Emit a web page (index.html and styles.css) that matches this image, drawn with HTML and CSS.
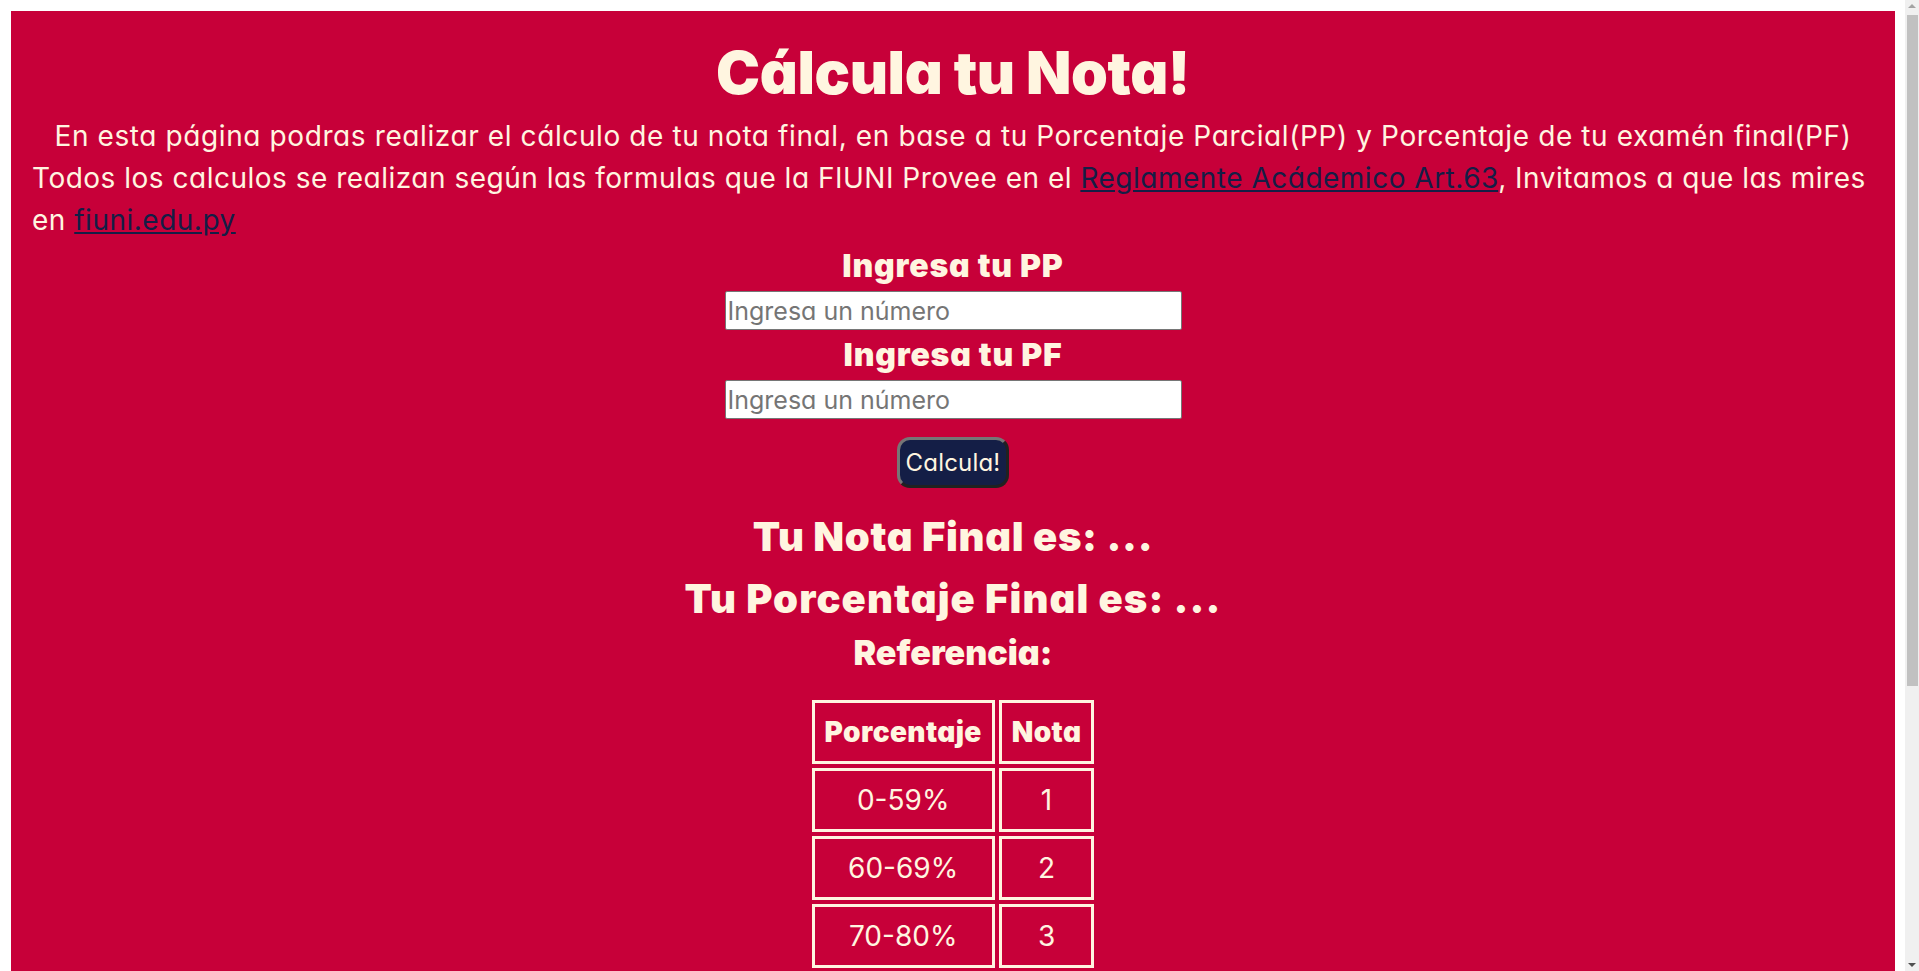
FILE: index.html
```html
<!DOCTYPE html>
<html lang="es">
<head>
<meta charset="utf-8">
<title>Cálcula tu Nota!</title>
<link rel="stylesheet" href="styles.css">
</head>
<body>
<main class="page">
  <h1 class="title">Cálcula tu Nota!</h1>
  <p class="intro">En esta página podras realizar el cálculo de tu nota final, en base a tu Porcentaje Parcial(PP) y Porcentaje de tu examén final(PF)</p>
  <p class="info">Todos los calculos se realizan según las formulas que la FIUNI Provee en el <a class="link" href="#">Reglamente Acádemico Art.63</a>, Invitamos a que las mires en <a class="link" href="#">fiuni.edu.py</a></p>
  <form class="calc">
    <label class="field-label" for="pp">Ingresa tu PP</label>
    <input class="field" id="pp" type="text" placeholder="Ingresa un número">
    <label class="field-label" for="pf">Ingresa tu PF</label>
    <input class="field" id="pf" type="text" placeholder="Ingresa un número">
    <button class="btn" type="button">Calcula!</button>
  </form>
  <h2 class="result result-nota">Tu Nota Final es: ...</h2>
  <h2 class="result result-pct">Tu Porcentaje Final es: ...</h2>
  <h3 class="ref-title">Referencia:</h3>
  <table class="ref-table">
    <thead>
      <tr><th>Porcentaje</th><th>Nota</th></tr>
    </thead>
    <tbody>
      <tr><td>0-59%</td><td>1</td></tr>
      <tr><td>60-69%</td><td>2</td></tr>
      <tr><td>70-80%</td><td>3</td></tr>
      <tr><td>81-90%</td><td>4</td></tr>
      <tr><td>91-100%</td><td>5</td></tr>
    </tbody>
  </table>
</main>
<div class="scrollbar" aria-hidden="true">
  <span class="sb-arrow sb-up"></span>
  <span class="sb-thumb"></span>
  <span class="sb-arrow sb-down"></span>
</div>
</body>
</html>
```

FILE: styles.css
```css
html, body {
  margin: 0;
}

body {
  padding: 11px 24px 11px 11px;
  background: #ffffff;
  font-family: Inter, "Open Sans", sans-serif;
  font-feature-settings: "cv11" 1;
}

.page {
  background: #C70039;
  color: #FFF5E0;
  padding: 26px 21px 248px;
  display: flex;
  flex-direction: column;
}

.title {
  margin: 0;
  font-size: 59px;
  line-height: 72px;
  font-weight: 900;
  letter-spacing: -0.4px;
  text-align: center;
}

.intro,
.info {
  margin: 0;
  font-size: 28px;
  line-height: 42px;
  letter-spacing: 0.6px;
}

.intro {
  margin-top: 6px;
  text-align: center;
}

.info {
  text-align: left;
  letter-spacing: 0.5px;
}

.link {
  color: #141E46;
}

.calc {
  display: flex;
  flex-direction: column;
  align-items: center;
}

.field-label {
  font-size: 32px;
  font-weight: 900;
  line-height: 50px;
  letter-spacing: 0.8px;
}

.field {
  box-sizing: border-box;
  width: 457px;
  height: 39px;
  margin: 0;
  padding: 1px 2px;
  border: 1px solid #767676;
  border-radius: 2px;
  background: #ffffff;
  font-family: inherit;
  font-feature-settings: "cv11" 1;
  font-size: 25px;
  color: #222;
}

.field::placeholder {
  color: #757575;
}

.btn {
  box-sizing: border-box;
  margin-top: 18px;
  height: 51px;
  padding: 0 6px;
  border: 3px outset #767676;
  border-radius: 13px;
  background: #141E46;
  color: #FFF5E0;
  font-family: inherit;
  font-feature-settings: "cv11" 1;
  font-size: 24px;
  letter-spacing: 0.2px;
}

.result {
  margin: 0;
  text-align: center;
  font-weight: 900;
  font-size: 40px;
  line-height: 62px;
  letter-spacing: 0.7px;
}

.result-nota {
  margin-top: 18px;
}

.result-pct {
  letter-spacing: 1.1px;
}

.ref-title {
  margin: 0;
  text-align: center;
  font-weight: 900;
  font-size: 34px;
  line-height: 46px;
  letter-spacing: 0;
}

.ref-table {
  align-self: center;
  margin-top: 20px;
  border-spacing: 4px;
  border-collapse: separate;
}

.ref-table th,
.ref-table td {
  border: 3px solid #FFF5E0;
  height: 58px;
  padding: 0 10px;
  text-align: center;
  font-size: 28px;
}

.ref-table th {
  font-weight: 900;
  letter-spacing: 0.4px;
}

.ref-table td {
  font-weight: 400;
}

/* decorative browser scrollbar, drawn over the viewport edge */
.scrollbar {
  position: fixed;
  top: 0;
  right: 0;
  bottom: 0;
  width: 14px;
  background: #f0f0f0;
}

.sb-thumb {
  position: absolute;
  top: 15px;
  left: 2px;
  width: 11px;
  height: 671px;
  background: #c1c1c1;
}

.sb-arrow {
  position: absolute;
  left: 3px;
  width: 0;
  height: 0;
  border-left: 4px solid transparent;
  border-right: 4px solid transparent;
}

.sb-up {
  top: 4px;
  border-bottom: 4px solid #a3a3a3;
}

.sb-down {
  bottom: 4px;
  border-top: 4px solid #505050;
}
```
